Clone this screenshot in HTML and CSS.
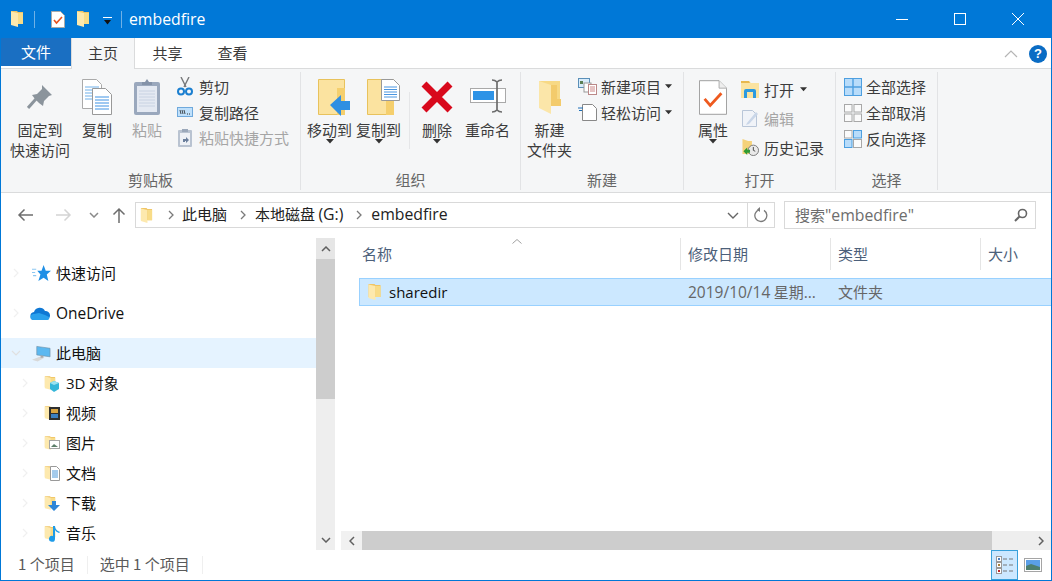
FILE: index.html
```html
<!DOCTYPE html>
<html lang="zh-CN">
<head>
<meta charset="utf-8">
<title>embedfire</title>
<link rel="stylesheet" href="styles.css">
</head>
<body>
<svg class="sprite" width="0" height="0" aria-hidden="true">
  <defs>
    <symbol id="folder" viewBox="0 0 14 18">
      <path d="M1 1h6l1 1h5v12H1z" fill="#f0c566"/>
      <path d="M1 1.5 8 3v14l-7-2z" fill="#fde9ae"/>
      <path d="M8 3h5v11H8z" fill="#f8dc88"/>
    </symbol>
    <symbol id="bigfolder" viewBox="0 0 24 34">
      <path d="M1 1h21v25H1z" fill="#f7d985"/>
      <path d="M1 1l12 4v29L1 28z" fill="#fbe6a9"/>
      <path d="M13 5h6v14h4v7H13z" fill="#f3cb6c"/>
    </symbol>
    <symbol id="caret" viewBox="0 0 8 5"><path d="M0 0h8L4 4.500z" fill="#333"/></symbol>
    <symbol id="tile" viewBox="0 0 18 18">
      <rect x=".5" y=".5" width="7.500" height="7.500" fill="#fbfbfb" stroke="#a8a8a8"/>
      <rect x="10" y=".5" width="7.500" height="7.500" fill="#fbfbfb" stroke="#a8a8a8"/>
      <rect x=".5" y="10" width="7.500" height="7.500" fill="#fbfbfb" stroke="#a8a8a8"/>
      <rect x="10" y="10" width="7.500" height="7.500" fill="#fbfbfb" stroke="#a8a8a8"/>
    </symbol>
    <symbol id="navchev" viewBox="0 0 6 10"><path d="M1 1l4 4-4 4" fill="none" stroke="#f0f0f0" stroke-width="1.200"/></symbol>
    <symbol id="pathchev" viewBox="0 0 6 10"><path d="M1 1l4 4-4 4" fill="none" stroke="#7a7a7a" stroke-width="1.300"/></symbol>
  </defs>
</svg>

<div class="window">
  <header class="titlebar">
    <svg class="qa-folder"><use href="#folder"/></svg>
    <span class="qa-sep"></span>
    <svg class="qa-prop" viewBox="0 0 14 17"><path d="M.5.5h9l4 4v12H.5z" fill="#fff" stroke="#aaa"/><path d="M3 9l2.500 3L11 6" fill="none" stroke="#e8501c" stroke-width="1.600"/></svg>
    <svg class="qa-folder2"><use href="#folder"/></svg>
    <svg class="qa-caret" viewBox="0 0 9 8"><path d="M0 0h9v1H0z" fill="#fff"/><path d="M1 3h7L4.500 7.500z" fill="#111"/></svg>
    <span class="qa-sep qa-sep2"></span>
    <span class="title-text">embedfire</span>
    <div class="winbtns">
      <svg class="winbtn" viewBox="0 0 14 14"><path d="M1 7.500h12" stroke="#fff" fill="none"/></svg>
      <svg class="winbtn" viewBox="0 0 14 14"><rect x="1.500" y="1.500" width="11" height="11" stroke="#fff" fill="none"/></svg>
      <svg class="winbtn" viewBox="0 0 14 14"><path d="M1 1l12 12M13 1L1 13" stroke="#fff" fill="none"/></svg>
    </div>
  </header>

  <nav class="tabs">
    <span class="tab tab-file">文件</span>
    <span class="tab tab-home">主页</span>
    <span class="tab tab-share">共享</span>
    <span class="tab tab-view">查看</span>
    <svg class="ribbon-up" viewBox="0 0 14 8"><path d="M1 7l6-6 6 6" fill="none" stroke="#b5b5b5" stroke-width="1.200"/></svg>
    <span class="help">?</span>
  </nav>

  <section class="ribbon">
    <div class="group group-clip">
      <div class="group-body">
        <div class="big big-pin">
          <svg class="ic-pin" viewBox="0 0 26 26"><path d="M15 1l10 10-3 1-5 5-1 5-4-3-4-4-3-4 5-1 5-5z" fill="#8b949c"/><path d="M9 15l-8 9" stroke="#8b949c" stroke-width="3"/></svg>
          <span class="lbl">固定到<br>快速访问</span>
        </div>
        <div class="big big-copy">
          <svg class="ic-copy" viewBox="0 0 30 36">
            <path d="M.5.5h14l5 5v24H.500z" fill="#fff" stroke="#aaa"/>
            <path d="M3 8h14M3 11h14M3 14h14M3 17h14M3 20h8" stroke="#6fb0ea"/>
            <path d="M10.500 9.500h13l6 6v20h-19z" fill="#fff" stroke="#999"/>
            <path d="M13 18h14M13 21h14M13 24h14M13 27h14M13 30h14" stroke="#3f93e4"/>
          </svg>
          <span class="lbl">复制</span>
        </div>
        <div class="big big-paste off">
          <svg class="ic-paste" viewBox="0 0 26 37"><rect x="0" y="4" width="26" height="33" rx="2" fill="#9aa8bd"/><rect x="3" y="8" width="20" height="26" fill="#e4e9f2"/><path d="M5 13h16M5 16h16M5 19h16M5 22h16M5 25h16M5 28h16" stroke="#c8d2e2"/><path d="M8 4h3l2-3 2 3h3v3H8z" fill="#8492a8"/></svg>
          <span class="lbl">粘贴</span>
        </div>
        <div class="smalls smalls-clip">
          <div class="small">
            <svg class="ic16" viewBox="0 0 16 19"><path d="M4 0l5 10M12 0L7 10" stroke="#77787a" stroke-width="1.400"/><circle cx="4" cy="14.500" r="3" fill="none" stroke="#1b7fd0" stroke-width="2"/><circle cx="12" cy="14.500" r="3" fill="none" stroke="#1b7fd0" stroke-width="2"/></svg>
            <span>剪切</span>
          </div>
          <div class="small">
            <svg class="ic16" viewBox="0 0 16 19"><rect x=".5" y="4.500" width="15" height="9" fill="#bfe0fb" stroke="#6fa9dc"/><path d="M3 7l1 4M5 7l1 4M7 7l1 4" stroke="#222" stroke-width=".8"/><path d="M10 11h1M12 11h1" stroke="#333"/></svg>
            <span>复制路径</span>
          </div>
          <div class="small off">
            <svg class="ic16" viewBox="0 0 16 19"><rect x="1" y="2" width="14" height="17" rx="1" fill="#b9c3d1"/><rect x="3" y="5" width="10" height="12" fill="#eef1f6"/><path d="M5 1h6v3H5z" fill="#9ba8ba"/><path d="M6 14v-3h3V9l3 3-3 3v-2H8v1z" fill="#6b7f9c"/></svg>
            <span>粘贴快捷方式</span>
          </div>
        </div>
      </div>
      <div class="group-name">剪贴板</div>
    </div>

    <div class="group group-org">
      <div class="group-body">
        <div class="big big-move">
          <svg class="ic-move" viewBox="0 0 33 37"><path d="M.5.5h26v35H.5z" fill="#fbe3a0" stroke="#e8c25c"/><path d="M19 9v27h8V9z" fill="#f5cf6d"/><path d="M12 26l11-10v6h9v9h-9v6z" fill="#2f8fe2"/></svg>
          <span class="lbl">移动到</span>
          <svg class="drop"><use href="#caret"/></svg>
        </div>
        <div class="big big-copyto">
          <svg class="ic-move" viewBox="0 0 33 37"><path d="M.5.5h26v35H.5z" fill="#fbe3a0" stroke="#e8c25c"/><path d="M19 12v24h8V12z" fill="#f5cf6d"/><path d="M14.500.5h12l6 6v15h-18z" fill="#fff" stroke="#999"/><path d="M17 8h13M17 10.500h13M17 13h13M17 15.500h13M17 18h13" stroke="#4a96e0"/></svg>
          <span class="lbl">复制到</span>
          <svg class="drop"><use href="#caret"/></svg>
        </div>
        <span class="vsep"></span>
        <div class="big big-del">
          <svg class="ic-del" viewBox="0 0 32 32"><path d="M3 3l26 26M29 3L3 29" stroke="#d8091c" stroke-width="7"/></svg>
          <span class="lbl">删除</span>
          <svg class="drop"><use href="#caret"/></svg>
        </div>
        <div class="big big-ren">
          <svg class="ic-ren" viewBox="0 0 36 34"><rect x=".5" y="9.500" width="35" height="14" fill="#fff" stroke="#a9a9a9"/><rect x="3" y="12" width="21" height="9" fill="#2e93e6"/><path d="M22 1c3 0 4 1 5 2 1-1 2-2 5-2M27 3v28M22 33c3 0 4-1 5-2 1 1 2 2 5 2" fill="none" stroke="#6c6c6c" stroke-width="1.700"/></svg>
          <span class="lbl">重命名</span>
        </div>
      </div>
      <div class="group-name">组织</div>
    </div>

    <div class="group group-new">
      <div class="group-body">
        <div class="big big-newf">
          <svg class="ic-newf"><use href="#bigfolder"/></svg>
          <span class="lbl">新建<br>文件夹</span>
        </div>
        <div class="smalls smalls-new">
          <div class="small">
            <svg class="ic18" viewBox="0 0 19 17"><rect x=".5" y=".5" width="11" height="9" fill="#d8ecfb" stroke="#5a8fb8"/><rect x="2" y="3" width="3" height="3" fill="#5a7f55"/><rect x="6" y="5" width="7" height="9" fill="#fff" stroke="#999"/><rect x="10.500" y="6.500" width="8" height="10" fill="#fff" stroke="#b88"/><path d="M12 9h5M12 11h5M12 13h5" stroke="#c88"/></svg>
            <span>新建项目</span>
            <svg class="drop-in"><use href="#caret"/></svg>
          </div>
          <div class="small">
            <svg class="ic18" viewBox="0 0 19 17"><path d="M4.500.5h10l4 4v12h-14z" fill="#fff" stroke="#888"/><path d="M0 4h5M1 6.500h3" stroke="#1c6fb8"/></svg>
            <span>轻松访问</span>
            <svg class="drop-in"><use href="#caret"/></svg>
          </div>
        </div>
      </div>
      <div class="group-name">新建</div>
    </div>

    <div class="group group-open">
      <div class="group-body">
        <div class="big big-prop">
          <svg class="ic-prop" viewBox="0 0 30 37"><path d="M.5.5h21l8 8v28H.5z" fill="#fff" stroke="#999"/><path d="M21.500.5v8h8" fill="#eee" stroke="#aaa"/><path d="M6 20l6 7L24 14" fill="none" stroke="#ee5a1f" stroke-width="3"/></svg>
          <span class="lbl">属性</span>
          <svg class="drop"><use href="#caret"/></svg>
        </div>
        <div class="smalls smalls-open">
          <div class="small">
            <svg class="ic18" viewBox="0 0 19 17"><path d="M0 0h8l2 2h8v15H0z" fill="#fbe3a0"/><path d="M0 0h8l1 2H0z" fill="#e8b84e"/><path d="M3 17v-7q0-2 2-2h8q2 0 2 2v7h-3v-6H6v6z" fill="#2c9ae0"/></svg>
            <span>打开</span>
            <svg class="drop-in drop-wide"><use href="#caret"/></svg>
          </div>
          <div class="small off">
            <svg class="ic18" viewBox="0 0 19 17"><path d="M1.500.5h10l4 4v12h-14z" fill="#f0f3f8" stroke="#b9c6d8"/><path d="M6 13l9-11 2 2-9 10-3 1z" fill="#c9d6e8"/></svg>
            <span>编辑</span>
          </div>
          <div class="small">
            <svg class="ic18" viewBox="0 0 19 18"><path d="M1 0l6 2h4v14H1z" fill="#f5d27a"/><circle cx="12.500" cy="12" r="5.500" fill="#e9e9e9" stroke="#777"/><path d="M12.500 8.500V12l2 1" fill="none" stroke="#444"/><path d="M2 13l4-4v2.500h3v3H6V17z" fill="#2f9b33"/></svg>
            <span>历史记录</span>
          </div>
        </div>
      </div>
      <div class="group-name">打开</div>
    </div>

    <div class="group group-sel">
      <div class="group-body">
        <div class="smalls smalls-sel">
          <div class="small">
            <svg class="ic18" viewBox="0 0 18 18"><rect x=".5" y=".5" width="17" height="17" fill="#b8dcfa" stroke="#4d9fe0"/><path d="M9 0v18M0 9h18" stroke="#4d9fe0" stroke-width="1.400"/></svg>
            <span>全部选择</span>
          </div>
          <div class="small">
            <svg class="ic18"><use href="#tile"/></svg>
            <span>全部取消</span>
          </div>
          <div class="small">
            <svg class="ic18" viewBox="0 0 18 18"><rect x=".5" y=".5" width="7.500" height="7.500" fill="#fbfbfb" stroke="#a8a8a8"/><rect x="9.500" y=".5" width="8" height="7.500" fill="#b8dcfa" stroke="#4d9fe0"/><rect x=".5" y="9.500" width="7.500" height="8" fill="#b8dcfa" stroke="#4d9fe0"/><rect x="9.500" y="9.500" width="8" height="8" fill="#fbfbfb" stroke="#a8a8a8"/></svg>
            <span>反向选择</span>
          </div>
        </div>
      </div>
      <div class="group-name">选择</div>
    </div>
  </section>

  <div class="addressrow">
    <svg class="ar-back" viewBox="0 0 16 14"><path d="M16 7H2M7.500 1.500L2 7l5.500 5.500" fill="none" stroke="#6d6d6d" stroke-width="1.500"/></svg>
    <svg class="ar-fwd" viewBox="0 0 16 14"><path d="M0 7h14M8.500 1.500L14 7l-5.500 5.500" fill="none" stroke="#d4d4d4" stroke-width="1.500"/></svg>
    <svg class="ar-down" viewBox="0 0 10 6"><path d="M1 1l4 4 4-4" fill="none" stroke="#8a8a8a" stroke-width="1.500"/></svg>
    <svg class="ar-up" viewBox="0 0 14 16"><path d="M7 16V2M1.500 7.500L7 2l5.500 5.500" fill="none" stroke="#6d6d6d" stroke-width="1.500"/></svg>
    <div class="addr">
      <svg class="addr-folder"><use href="#folder"/></svg>
      <svg class="pchev chev1"><use href="#pathchev"/></svg>
      <span class="crumb">此电脑</span>
      <svg class="pchev"><use href="#pathchev"/></svg>
      <span class="crumb">本地磁盘 <span class="latin wide">(G:)</span></span>
      <svg class="pchev"><use href="#pathchev"/></svg>
      <span class="crumb latin wide">embedfire</span>
      <svg class="addr-drop" viewBox="0 0 12 7"><path d="M1 1l5 5 5-5" fill="none" stroke="#666" stroke-width="1.400"/></svg>
      <div class="addr-refresh">
        <svg viewBox="0 0 14 16" class="refresh"><path d="M5 2.800a6 6 0 1 0 5 .6" fill="none" stroke="#7a7a7a" stroke-width="1.300"/><path d="M6 0v5L3 2.500z" fill="#7a7a7a"/></svg>
      </div>
    </div>
    <div class="search">
      <span>搜索<span class="latin wide">"embedfire"</span></span>
      <svg class="search-ic" viewBox="0 0 14 14"><circle cx="8.500" cy="5.500" r="4" fill="none" stroke="#666" stroke-width="1.600"/><path d="M5.500 8.500L1 13" stroke="#666" stroke-width="2"/></svg>
    </div>
  </div>

  <main class="content">
    <aside class="nav">
      <div class="nav-list">
        <div class="row row-top"><svg class="chev"><use href="#navchev"/></svg>
          <svg class="ni" viewBox="0 0 18 16"><path d="M11 0l2 5.500h5l-4 3.500 1.500 6L11 12l-5 3 2-6-3-3.500h4z" fill="#1f8fe6"/><path d="M0 4h4M0 7h3M1 10h3" stroke="#8cc7f2"/></svg>
          <span class="rt">快速访问</span></div>
        <div class="row row-top"><svg class="chev"><use href="#navchev"/></svg>
          <svg class="ni ni-od" viewBox="0 0 20 13"><path d="M5 13a4 4 0 0 1-1-8 6 6 0 0 1 11-1 4.500 4.500 0 0 1 1 9z" fill="#0f78d4"/><path d="M3 13a3 3 0 0 1 1-6l5-1 6 2 4 2q1 3-2 3z" fill="#2aa0ec"/></svg>
          <span class="rt latin od">OneDrive</span></div>
        <div class="row row-top row-on"><svg class="chev chev-open" viewBox="0 0 10 6"><path d="M1 1l4 4 4-4" fill="none" stroke="#e0e0e0" stroke-width="1.200"/></svg>
          <svg class="ni" viewBox="0 0 20 17"><path d="M5 1l14 2v9L5 10z" fill="#5cb8f0" stroke="#6b8aa0" stroke-width=".6"/><path d="M0 15l8-3 5 1-7 4z" fill="#d8d8d8"/><path d="M9 10.500l3 .5v2H9z" fill="#aaa"/></svg>
          <span class="rt">此电脑</span></div>
        <div class="row row-sub"><svg class="chev"><use href="#navchev"/></svg>
          <svg class="si" viewBox="0 0 16 18"><use href="#folder" width="12" height="18"/><path d="M10 7l5 2v6l-5 3-4-3V9z" fill="#35b6d8"/><path d="M6 9l4 2 5-2-5-2z" fill="#9be2f0"/></svg>
          <span class="rt"><span class="latin">3D</span> 对象</span></div>
        <div class="row row-sub"><svg class="chev"><use href="#navchev"/></svg>
          <svg class="si" viewBox="0 0 16 18"><use href="#folder" width="12" height="18"/><rect x="5" y="3" width="11" height="13" fill="#2f2f2f"/><rect x="7" y="5" width="7" height="4" fill="#d9a441"/><rect x="7" y="10" width="7" height="4" fill="#3c7fc0"/></svg>
          <span class="rt">视频</span></div>
        <div class="row row-sub"><svg class="chev"><use href="#navchev"/></svg>
          <svg class="si" viewBox="0 0 16 18"><use href="#folder" width="12" height="18"/><rect x="5.500" y="6.500" width="10" height="8" fill="#fff" stroke="#a5a5a5"/><path d="M7 13l3-3 4 3z" fill="#5d7f6a"/></svg>
          <span class="rt">图片</span></div>
        <div class="row row-sub"><svg class="chev"><use href="#navchev"/></svg>
          <svg class="si" viewBox="0 0 16 18"><use href="#folder" width="12" height="18"/><path d="M6.500 2.500h6l3 3v11h-9z" fill="#fff" stroke="#999"/><path d="M8 7h6M8 9h6M8 11h6M8 13h6" stroke="#4a96d8"/></svg>
          <span class="rt">文档</span></div>
        <div class="row row-sub"><svg class="chev"><use href="#navchev"/></svg>
          <svg class="si" viewBox="0 0 16 18"><use href="#folder" width="12" height="18"/><path d="M8 7h4v4h4l-6 6-6-6h4z" fill="#2e86d8"/></svg>
          <span class="rt">下载</span></div>
        <div class="row row-sub"><svg class="chev"><use href="#navchev"/></svg>
          <svg class="si" viewBox="0 0 16 18"><use href="#folder" width="12" height="18"/><path d="M9 2h2q0 4 5 6l-1 1q-3-1-4-3v9a3 3 0 1 1-2-3z" fill="#1e9be8"/></svg>
          <span class="rt">音乐</span></div>
      </div>
      <div class="vscroll">
        <div class="sb-btn sb-up"><svg viewBox="0 0 10 6"><path d="M1 5l4-4 4 4" fill="none" stroke="#606060" stroke-width="1.500"/></svg></div>
        <div class="vthumb"></div>
        <div class="sb-btn sb-down"><svg viewBox="0 0 10 6"><path d="M1 1l4 4 4-4" fill="none" stroke="#606060" stroke-width="1.500"/></svg></div>
      </div>
    </aside>

    <section class="files">
      <div class="cols">
        <div class="col col-name">名称<svg class="sort" viewBox="0 0 10 5"><path d="M.5 4.500L5 .5l4.500 4" fill="none" stroke="#a0a0a0"/></svg></div>
        <div class="col">修改日期</div>
        <div class="col">类型</div>
        <div class="col">大小</div>
      </div>
      <div class="filerow">
        <div class="cell cell-name"><svg class="fi"><use href="#folder"/></svg><span class="latin">sharedir</span></div>
        <div class="cell cell-dim"><span class="latin date">2019/10/14</span> 星期<span class="latin date">...</span></div>
        <div class="cell cell-dim">文件夹</div>
      </div>
      <div class="hscroll">
        <div class="hbtn"><svg viewBox="0 0 6 10"><path d="M5 1L1 5l4 4" fill="none" stroke="#606060" stroke-width="1.500"/></svg></div>
        <div class="hthumb"></div>
        <div class="hbtn hbtn-r"><svg viewBox="0 0 6 10"><path d="M1 1l4 4-4 4" fill="none" stroke="#606060" stroke-width="1.500"/></svg></div>
      </div>
    </section>
  </main>

  <footer class="status">
    <span class="st">1 个项目</span>
    <span class="st-sep"></span>
    <span class="st">选中 1 个项目</span>
    <span class="st-sep"></span>
    <div class="views">
      <div class="view view-on">
        <svg viewBox="0 0 18 18"><rect x=".5" y=".5" width="5" height="5" fill="#fff" stroke="#999"/><rect x="2" y="2" width="2" height="2" fill="#4a7fc0"/><rect x=".5" y="6.500" width="5" height="5" fill="#fff" stroke="#999"/><rect x="2" y="8" width="2" height="2" fill="#a8803a"/><rect x=".5" y="12.500" width="5" height="5" fill="#fff" stroke="#999"/><rect x="2" y="14" width="2" height="2" fill="#c0282a"/><path d="M7 3h4M13 3h4M7 9h4M13 9h4M7 15h4M13 15h4" stroke="#777"/></svg>
      </div>
      <div class="view">
        <svg viewBox="0 0 18 14"><rect x=".5" y=".5" width="17" height="13" fill="#fff" stroke="#a5a5a5"/><rect x="2" y="2" width="14" height="10" fill="#5a9fe8"/><path d="M2 8l5-2 9 3v3H2z" fill="#4d7f70"/></svg>
      </div>
    </div>
  </footer>
</div>
</body>
</html>
```

FILE: styles.css
```css
* { box-sizing: border-box; }
html, body { margin: 0; padding: 0; background: #fff; overflow: hidden; }
body { font-family: "Noto Sans CJK SC", "Noto Sans", sans-serif; font-size: 15px; color: #333; }
svg { display: block; flex: none; }
.sprite { position: absolute; }
.latin { font-family: "Open Sans", "Noto Sans", sans-serif; }
.wide { font-size: 15.800px; }

.window { width: 1052px; height: 581px; display: flex; flex-direction: column; border: solid #0078d7; border-width: 0 1px 1px; background: #fff; overflow: hidden; }

/* title bar */
.titlebar { height: 38px; flex: none; background: #0078d7; display: flex; align-items: center; color: #fff; }
.qa-folder { width: 14px; height: 18px; margin-left: 9px; }
.qa-sep { width: 1px; height: 17px; background: #6fb1e6; margin-left: 10px; }
.qa-prop { width: 14px; height: 17px; margin-left: 16px; }
.qa-folder2 { width: 14px; height: 18px; margin-left: 11px; }
.qa-caret { width: 9px; height: 8px; margin-left: 13px; margin-top: 3px; }
.qa-sep2 { margin-left: 9px; }
.title-text { font-family: "Open Sans", sans-serif; font-size: 15.800px; margin-left: 7px; }
.winbtns { margin-left: auto; display: flex; gap: 44px; width: 164px; padding-left: 11px; margin-right: 3px; }
.winbtn { width: 14px; height: 14px; }

/* tabs */
.tabs { height: 31px; flex: none; display: flex; align-items: stretch; background: #fff; border-bottom: 1px solid #dadbdc; position: relative; }
.tab { width: 65px; display: flex; align-items: center; justify-content: center; color: #3a3a3a; padding-bottom: 2px; }
.tab-file { width: 70px; height: 28px; background: #1a6fc2; color: #fff; }
.tab-home { width: 64px; background: #f5f6f7; border: 1px solid #dadbdc; border-width: 0 1px; height: 31px; margin-bottom: -1px; }
.ribbon-up { width: 14px; height: 8px; margin: 12px 0 0 auto; }
.help { width: 18px; height: 18px; border-radius: 50%; background: #0a6cc4; color: #fff; font: bold 13px/18px "Liberation Sans", sans-serif; text-align: center; margin: 7px 4px 0 11px; }

/* ribbon */
.ribbon { height: 124px; flex: none; background: #f5f6f7; border-bottom: 1px solid #dadbdc; display: flex; }
.group { display: flex; flex-direction: column; border-right: 1px solid #e2e3e5; margin: 3px 0 2px; }
.group-body { flex: 1; min-height: 0; display: flex; position: relative; }
.group-name { height: 26px; flex: none; text-align: center; color: #666; font-size: 15px; line-height: 32px; }
.group-clip { width: 300px; }
.group-org { width: 220px; }
.group-new { width: 163px; }
.group-open { width: 152px; }
.group-sel { width: 102px; }

.big { display: flex; flex-direction: column; align-items: center; position: relative; height: 92px; }
.lbl { display: block; text-align: center; white-space: nowrap; line-height: 20px; font-size: 15px; color: #3c3c3c; position: absolute; top: 48px; left: 50%; transform: translateX(-50%); }
.big.off .lbl { color: #a5a5a5; }
.drop { width: 8px; height: 5px; position: absolute; top: 67px; left: 50%; margin-left: -4px; }

.big-pin { width: 60px; margin-left: 9px; padding-top: 12px; }
.ic-pin { width: 26px; height: 26px; }
.big-copy { width: 30px; margin-left: 12px; padding-top: 7px; }
.ic-copy { width: 30px; height: 36px; }
.big-paste { width: 30px; margin-left: 20px; padding-top: 6px; }
.ic-paste { width: 26px; height: 37px; }
.smalls { display: flex; flex-direction: column; }
.smalls-clip { margin-left: 15px; padding-top: 4px; gap: 4.500px; }
.small { height: 21px; display: flex; align-items: center; white-space: nowrap; font-size: 15px; color: #3c3c3c; }
.small.off { color: #a5a5a5; }
.ic16 { width: 16px; height: 19px; margin-right: 6px; }
.ic18 { width: 19px; height: 17px; margin-right: 4px; }

.big-move { width: 45px; margin-left: 6px; padding-top: 7px; }
.big-copyto { width: 45px; margin-left: 4px; padding-top: 7px; }
.ic-move { width: 33px; height: 37px; margin-left: 10px; }
.vsep { width: 1px; height: 57px; background: #e5e6e8; margin: 20px 0 0 8px; }
.big-del { width: 34px; margin-left: 10px; padding-top: 9px; }
.ic-del { width: 32px; height: 32px; }
.big-ren { width: 45px; margin-left: 11px; padding-top: 7px; }
.ic-ren { width: 36px; height: 34px; }

.big-newf { width: 45px; margin-left: 6px; padding-top: 8px; }
.ic-newf { width: 24px; height: 34px; }
.smalls-new { margin-left: 6px; padding-top: 4px; gap: 5px; }
.drop-in { width: 7px; height: 5px; margin-left: 4px; }
.drop-wide { margin-left: 6px; }

.big-prop { width: 30px; margin-left: 14px; padding-top: 7px; }
.ic-prop { width: 28px; height: 37px; }
.smalls-open { margin-left: 13px; padding-top: 7px; gap: 8px; }
.smalls-sel { margin-left: 8px; padding-top: 4px; gap: 5px; }
.smalls-sel .ic18 { width: 18px; height: 18px; }

/* address */
.addressrow { height: 42px; flex: none; display: flex; align-items: center; padding-top: 2px; position: relative; }
.ar-back { width: 16px; height: 14px; margin-left: 16px; }
.ar-fwd { width: 16px; height: 14px; margin-left: 23px; }
.ar-down { width: 10px; height: 6px; margin-left: 17px; }
.ar-up { width: 14px; height: 16px; margin-left: 13px; }
.addr { width: 640px; height: 26px; margin-left: 9px; border: 1px solid #d9d9d9; display: flex; align-items: center; position: relative; }
.addr-folder { width: 13px; height: 17px; margin-left: 4px; }
.pchev { width: 6px; height: 10px; }
.chev1 { margin-left: 15px; margin-right: 8px; }
.crumb { font-size: 15px; line-height: 20px; color: #222; white-space: nowrap; padding-bottom: 2px; }
.crumb.wide { font-size: 15.800px; }
.crumb + .pchev { margin-left: 13px; margin-right: 9px; }
.addr-drop { width: 12px; height: 7px; margin-left: auto; margin-right: 8px; }
.addr-refresh { width: 27px; height: 24px; border-left: 1px solid #d9d9d9; display: flex; align-items: center; justify-content: center; }
.refresh { width: 14px; height: 16px; }
.search { width: 252px; height: 28px; margin-left: 9px; border: 1px solid #d9d9d9; display: flex; align-items: center; padding: 0 7px 0 10px; color: #6d6d6d; font-size: 15px; line-height: 20px; justify-content: space-between; }
.search-ic { width: 14px; height: 14px; }

/* content */
.content { flex: 1; min-height: 0; display: flex; }
.nav { width: 334px; flex: none; display: flex; overflow: hidden; padding-top: 3px; }
.nav-list { width: 315px; padding-top: 20px; overflow: hidden; height: 312px; }
.row { height: 30px; display: flex; align-items: center; color: #111; font-size: 15px; white-space: nowrap; position: relative; }
.rt { line-height: 20px; padding-bottom: 1px; }
.od { font-size: 15.500px; margin-left: 1px; }
.row-top { margin-bottom: 10px; }
.row-on { background: #e5f3ff; margin-bottom: 0; }
.chev { width: 6px; height: 10px; margin-left: 12px; }
.chev-open { width: 10px; height: 6px; margin-left: 10px; margin-right: -2px; }
.ni { width: 19px; height: 17px; margin: 0 5px 0 13px; }
.ni-od { width: 20px; height: 13px; margin: 0 5px 0 11px; }
.row-sub .chev { margin-left: 21px; }
.si { width: 16px; height: 18px; margin: 0 6px 0 16px; }

.vscroll { width: 19px; height: 312px; background: #eee; display: flex; flex-direction: column; }
.sb-btn { height: 21px; flex: none; display: flex; align-items: center; justify-content: center; }
.sb-btn svg { width: 10px; height: 6px; }
.sb-up { background: #e6e6e6; }
.vthumb { height: 140px; background: #cdcdcd; }
.sb-down { margin-top: auto; }

.files { flex: 1; min-width: 0; display: flex; flex-direction: column; padding-top: 3px; position: relative; }
.cols { height: 32px; flex: none; display: grid; grid-template-columns: 346px 150px 150px 70px; }
.col { display: flex; align-items: center; padding: 0 0 2px 7px; color: #4c607a; font-size: 15px; border-right: 1px solid #e5e5e5; position: relative; height: 32px; }
.col:last-child { border-right: 0; }
.col-name { padding-left: 27px; }
.sort { width: 10px; height: 5px; position: absolute; left: 177px; top: 1px; }
.filerow { height: 28px; margin: 8px -2px 0 24px; flex: none; background: #cce8ff; border: 1px solid #99d1ff; display: grid; grid-template-columns: 321px 150px 1fr; align-items: center; font-size: 15px; line-height: 20px; }
.cell { white-space: nowrap; padding-bottom: 1px; }
.cell-name { display: flex; align-items: center; color: #111; padding-left: 7px; }
.fi { width: 15px; height: 18px; margin-right: 7px; }
.cell-dim { color: #666; padding-left: 7px; }
.date { font-size: 15.500px; }
.hscroll { margin: auto 0 0 6px; height: 19px; width: 710px; display: flex; background: #eee; }
.hbtn { width: 21px; display: flex; align-items: center; justify-content: center; background: #f1f1f1; }
.hbtn svg { width: 6px; height: 10px; }
.hthumb { width: 630px; background: #cdcdcd; }
.hbtn-r { margin-left: auto; background: #eee; }

/* status */
.status { height: 30px; flex: none; display: flex; align-items: center; font-size: 15px; color: #5a5a5a; padding-left: 17px; }
.st { line-height: 20px; padding-bottom: 2px; }
.st-sep { width: 1px; height: 18px; background: #efefef; margin: 0 12px; }
.views { margin-left: auto; display: flex; align-items: stretch; height: 30px; margin-right: 7px; gap: 4px; }
.view { width: 22px; display: flex; align-items: center; justify-content: center; }
.view-on { width: 27px; background: #cce8ff; border: 1px solid #38a0da; }
.view svg { width: 18px; }
.view-on svg { height: 18px; }
.view:not(.view-on) svg { height: 14px; }
```
